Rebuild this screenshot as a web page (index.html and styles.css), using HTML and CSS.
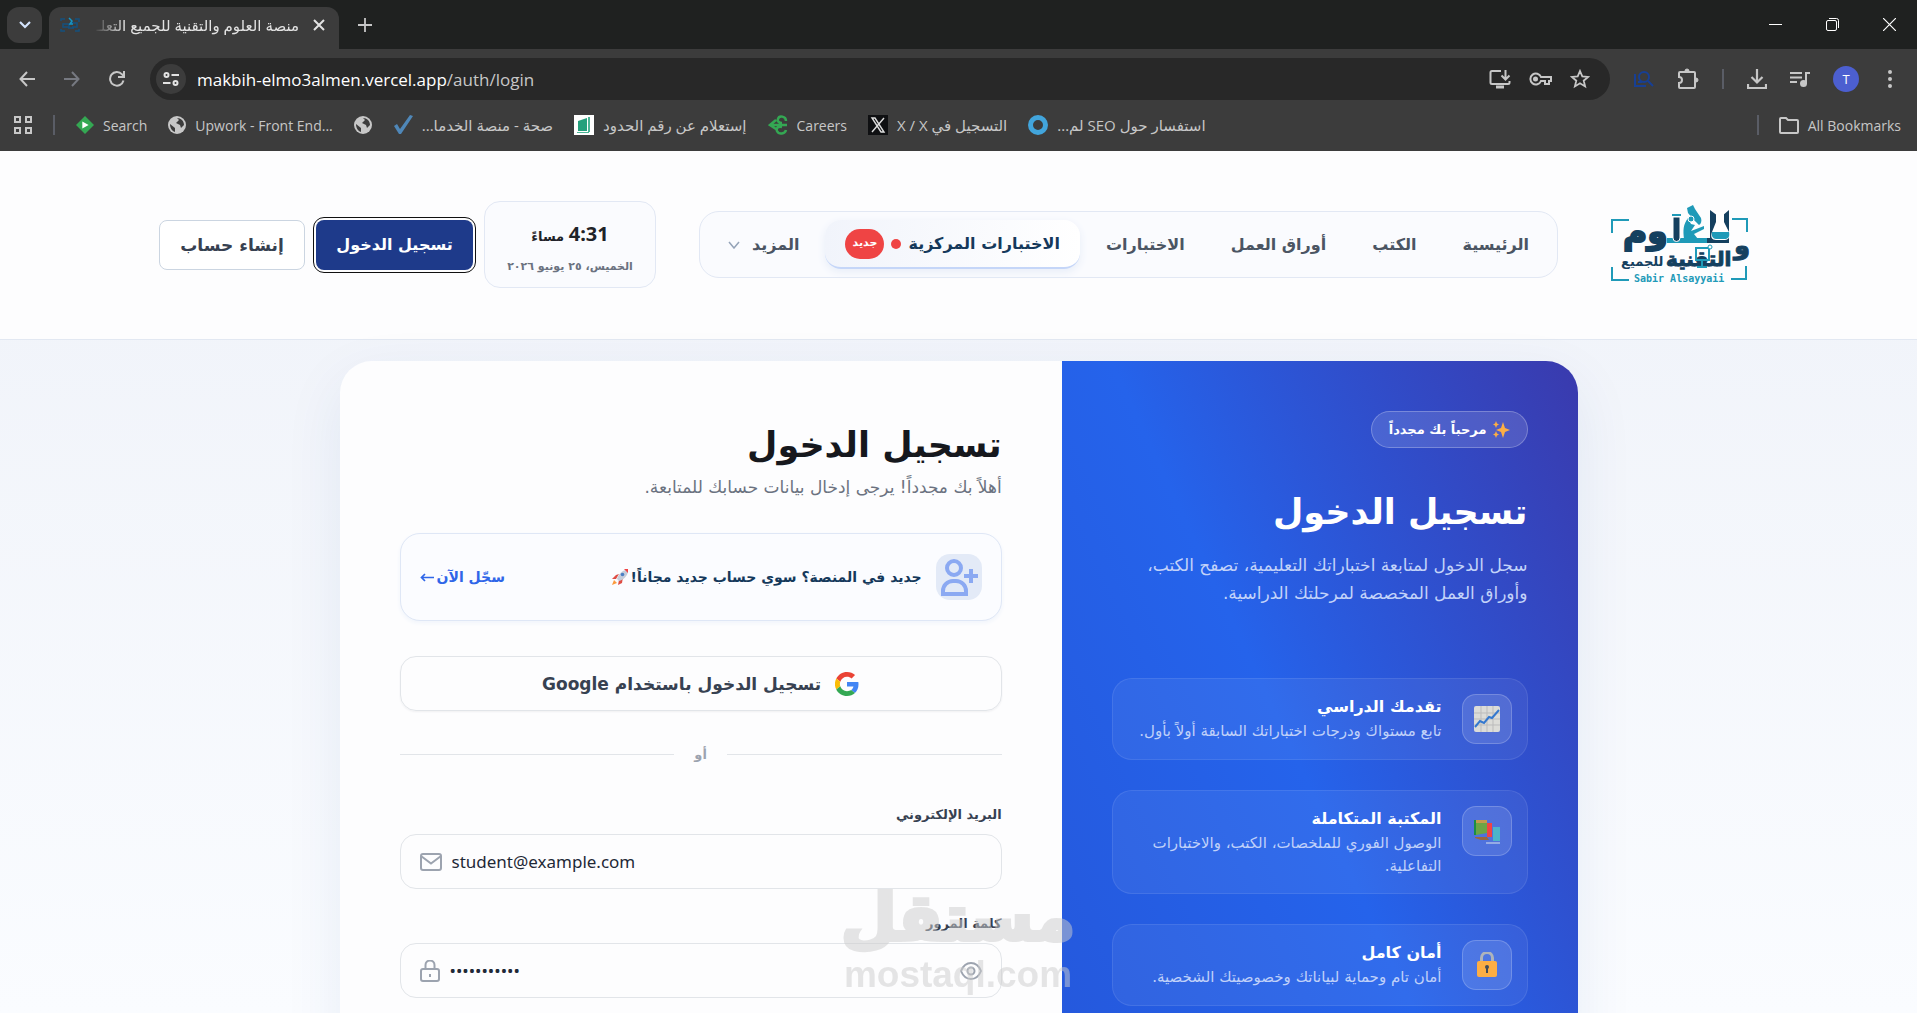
FILE: index.html
```html
<!DOCTYPE html>
<html lang="ar">
<head>
    <meta charset="UTF-8">
    <title>منصة العلوم والتقنية للجميع</title>
    <link rel="stylesheet" href="styles.css">
</head>
<body>
<div class="browser">
    <div class="tabs">
        <button class="tabSearch" aria-label="Search tabs"><svg width="12" height="8" viewBox="0 0 12 8"><path d="M1 1l5 5 5-5" fill="none" stroke="#d3e3fd" stroke-width="2.2"/></svg></button>
        <div class="tab">
            <svg class="favicon" width="20" height="16" viewBox="0 0 20 16"><path d="M1 4v-2h4M15 2h4v3M1 12v2h4M15 14h4v-2M3 7h6v3H3zM12 6h5v4h-5M8 11h6" fill="none" stroke="#15507d" stroke-width="1.5"/><path d="M9 1l3 3-2 3h3" fill="none" stroke="#1595c5" stroke-width="1.5"/></svg>
            <span class="tabTitle" dir="rtl">منصة العلوم والتقنية للجميع التعلـ</span>
            <button aria-label="Close tab"><svg width="12" height="12" viewBox="0 0 12 12"><path d="M1 1l10 10M11 1L1 11" stroke="#e3e3e3" stroke-width="2"/></svg></button>
        </div>
        <button class="newTab" aria-label="New tab"><svg width="14" height="14" viewBox="0 0 14 14"><path d="M7 0v14M0 7h14" stroke="#c7c7c7" stroke-width="1.8"/></svg></button>
        <div class="winBtns">
            <button aria-label="Minimize"><svg width="13" height="13" viewBox="0 0 13 13"><path d="M0 6.500h13" stroke="#fff"/></svg></button>
            <button aria-label="Restore"><svg width="13" height="13" viewBox="0 0 13 13" fill="none" stroke="#fff"><rect x=".5" y="2.500" width="10" height="10" rx="1.500"/><path d="M3 .5h7.500a2 2 0 0 1 2 2V10"/></svg></button>
            <button aria-label="Close"><svg width="13" height="13" viewBox="0 0 13 13"><path d="M0 0l13 13M13 0L0 13" stroke="#fff" stroke-width="1.200"/></svg></button>
        </div>
    </div>
    <div class="toolbar">
        <div class="navBtns">
            <button aria-label="Back"><svg width="16" height="16" viewBox="0 0 16 16"><path d="M16 8H1.500M8 1L1.500 8 8 15" fill="none" stroke="#c7c7c7" stroke-width="2"/></svg></button>
            <button aria-label="Forward"><svg width="16" height="16" viewBox="0 0 16 16"><path d="M0 8h14.500M8 1l6.500 7L8 15" fill="none" stroke="#767981" stroke-width="2"/></svg></button>
            <button aria-label="Reload"><svg width="16" height="16" viewBox="0 0 16 16"><path d="M14.500 9.500A6.800 6.800 0 1 1 13 3.300l2 2M15 0v6H9" fill="none" stroke="#c7c7c7" stroke-width="2"/></svg></button>
        </div>
        <div class="omnibox">
            <span class="siteInfo"><svg width="16" height="14" viewBox="0 0 16 14" fill="none" stroke="#e3e3e3" stroke-width="2"><circle cx="3.500" cy="3" r="2"/><path d="M8.500 3H16M0 11h7.500"/><circle cx="12.500" cy="11" r="2"/></svg></span>
            <span class="url">makbih-elmo3almen.vercel.app<span>/auth/login</span></span>
            <div class="omniIcons">
                <svg width="22" height="20" viewBox="0 0 22 20" fill="none" stroke="#c7c7c7" stroke-width="2"><path d="M12 2H3a1.500 1.500 0 0 0-1.500 1.500v10A1.500 1.500 0 0 0 3 15h16a1.500 1.500 0 0 0 1.500-1.500V12M16.500 1v9M12.500 6.500l4 4 4-4"/><path d="M7 18h8" stroke-width="3"/></svg>
                <svg width="23" height="14" viewBox="0 0 23 14" fill="none" stroke="#c7c7c7" stroke-width="2"><path d="M12 5h10v4h-2v3h-4V9h-4a5.500 5.500 0 1 1 0-4z"/><circle cx="6.500" cy="7" r="1.500" fill="#c7c7c7"/></svg>
                <svg width="20" height="20" viewBox="0 0 20 20" fill="none" stroke="#c7c7c7" stroke-width="1.800"><path d="M10 2l2.300 5.400 5.900.5-4.500 3.800 1.400 5.700L10 14.300l-5.100 3.100 1.400-5.700L1.800 7.900l5.900-.5z"/></svg>
            </div>
        </div>
        <div class="extBtns">
            <svg width="20" height="18" viewBox="0 0 20 18" fill="none" stroke="#173f94" stroke-width="2"><circle cx="10" cy="7" r="5"/><path d="M14 11l5 5M1 4v12h11M4 12h4"/></svg>
            <svg width="22" height="22" viewBox="0 0 22 22" fill="none" stroke="#c7c7c7" stroke-width="2"><path d="M3 4h14a1 1 0 0 1 1 1v14a1 1 0 0 1-1 1H3a1 1 0 0 1-1-1v-4c4 0 4-6 0-6V5a1 1 0 0 1 1-1z"/><path d="M8 3a2 2 0 0 1 4 0zM19 10a2 2 0 0 1 0 4z" fill="#c7c7c7" stroke-width="1"/></svg>
            <i class="sep"></i>
            <svg width="20" height="20" viewBox="0 0 20 20" fill="none" stroke="#c7c7c7" stroke-width="2.200"><path d="M10 0v13M4.500 8l5.500 5.500L15.500 8M1 15v4h18v-4"/></svg>
            <svg width="20" height="16" viewBox="0 0 20 16" fill="none" stroke="#c7c7c7" stroke-width="2"><path d="M0 2h12M0 6.500h12M0 11h7M16 13V2h4"/><circle cx="13.500" cy="12.500" r="2.500" fill="#c7c7c7"/></svg>
            <span class="avatar">T</span>
            <svg width="4" height="18" viewBox="0 0 4 18" fill="#c7c7c7"><circle cx="2" cy="2" r="2"/><circle cx="2" cy="9" r="2"/><circle cx="2" cy="16" r="2"/></svg>
        </div>
    </div>
    <div class="bookmarks">
        <svg width="18" height="18" viewBox="0 0 18 18" fill="none" stroke="#c7c7c7" stroke-width="2"><path d="M1 1h5v5H1zM12 1h5v5h-5zM1 12h5v5H1zM12 12h5v5h-5z"/></svg>
        <i class="sep"></i>
        <a href="#"><svg width="18" height="20" viewBox="0 0 20 20"><path d="M10 0l10 10-10 10L0 10z" fill="#34a853"/><path d="M7 6l7 4-7 4z" fill="#fff"/></svg>Search</a>
        <a href="#"><svg width="18" height="18" viewBox="0 0 18 18"><circle cx="9" cy="9" r="9" fill="#c7c7c7"/><path d="M2 8l5 4v4c-3-1-5-4-5-8zM9 2l2 2-3 3 4 2 1 3 3-3c0-4-3-7-7-7z" fill="#3c3c3c"/></svg>Upwork - Front End...</a>
        <a href="#" aria-label="Bookmark"><svg width="18" height="18" viewBox="0 0 18 18"><circle cx="9" cy="9" r="9" fill="#c7c7c7"/><path d="M2 8l5 4v4c-3-1-5-4-5-8zM9 2l2 2-3 3 4 2 1 3 3-3c0-4-3-7-7-7z" fill="#3c3c3c"/></svg></a>
        <a href="#"><svg width="20" height="20" viewBox="0 0 20 20"><path d="M1 11l3-2 3 5L17 0l3 1L8 19H6z" fill="#4f87b8"/></svg><bdi class="bmAr" dir="rtl">صحة - منصة الخدما...</bdi></a>
        <a href="#"><svg width="20" height="20" viewBox="0 0 20 20"><path d="M0 0h20v20H0z" fill="#fff"/><path d="M4 6l9-3v13H4z" fill="#24a07c"/><path d="M14 2h2v15h-2zM3 17h12v1H3z" fill="#4bb596"/></svg><bdi class="bmAr" dir="rtl">إستعلام عن رقم الحدود</bdi></a>
        <a href="#"><svg width="20" height="20" viewBox="0 0 20 20" fill="none" stroke="#34a853" stroke-width="2.500"><path d="M18 6c0-5-7-6-8-2-1 2 1 4 4 4M19 10H2M8 5L2 10l6 4M14 12c-4-1-6 1-5 4 2 4 8 3 9-1"/></svg>Careers</a>
        <a href="#"><svg width="20" height="20" viewBox="0 0 20 20"><path d="M0 0h20v20H0z" fill="#0f1012"/><path d="M4 3h3l9 14h-3zM16 3L4 17" fill="none" stroke="#ddd" stroke-width="1.400"/></svg><bdi class="bmAr" dir="rtl">التسجيل في X / X</bdi></a>
        <a href="#"><svg width="20" height="20" viewBox="0 0 20 20"><circle cx="10" cy="10" r="7.500" fill="none" stroke="#42a5dc" stroke-width="5"/></svg><bdi class="bmAr" dir="rtl">استفسار حول SEO لم...</bdi></a>
        <div class="allBm">
            <i class="sep"></i>
            <a href="#"><svg width="20" height="17" viewBox="0 0 20 17"><path d="M1 2a1 1 0 0 1 1-1h5l2 2h9a1 1 0 0 1 1 1v11a1 1 0 0 1-1 1H2a1 1 0 0 1-1-1z" fill="none" stroke="#c7c7c7" stroke-width="2"/></svg>All Bookmarks</a>
        </div>
    </div>
</div>

<div class="page" dir="rtl">
    <header class="header">
        <a class="logo" href="#" aria-label="العلوم والتقنية للجميع">
            <svg width="156" height="88" viewBox="0 -3 156 88" direction="ltr">
                <g fill="none" stroke="#1f9ab8" stroke-width="2"><path d="M11 29V16h17M131 15h15v13M11 63v13h17M130 75h15V62"/></g>
                <g class="logoDark">
                    <text x="22" y="39" class="logoBig">وم</text>
                    <text x="133" y="50" class="logoWaw">و</text>
                    <text x="65" y="62" class="logoMid">التقنية</text>
                    <text x="20" y="62" class="logoSmall">للجميع</text>
                </g>
                <path d="M109 6l8 6h4l7-6v33h-22v-5h3z" fill="#15405f"/>
                <path d="M115 8h8v10l5 10c2 5-1 8-4 8h-9c-4 0-6-3-4-8l4-10z" fill="#fff"/>
                <path d="M111 28h17c1 5-1 7-4 7h-9c-3 0-5-3-4-7z" fill="#1f9ab8"/>
                <path d="M66 34h40v5H66zM71 10h9v2h-9z" fill="#1f9ab8"/>
                <path d="M72 13h7v21a3 3 0 0 1-7 0z" fill="#15405f" stroke="#fff"/>
                <path d="M86 4l6-3 2 4 6 9c1 3 0 6-2 7l-6-6-5-6zM87 14l3 6 4 1-4 6 13-5v3l-10 5 4 5H83c-1-9-1-14 4-21z" fill="#1f9ab8"/>
                <circle cx="90" cy="15" r="3" fill="#1f9ab8" stroke="#fff"/>
                <path d="M95 44h13v12H95zM101 56v7M96 63h10" fill="none" stroke="#1f9ab8" stroke-width="2"/>
                <circle cx="109" cy="43" r="2" fill="#fff" stroke="#1f9ab8"/>
                <text x="33" y="78" class="logoLatin">Sabir Alsayyaii</text>
            </svg>
        </a>
        <nav class="nav">
            <a href="#">الرئيسية</a>
            <a href="#">الكتب</a>
            <a href="#">أوراق العمل</a>
            <a href="#">الاختبارات</a>
            <a href="#" class="on">الاختبارات المركزية<i class="dot"></i><span class="new">جديد</span></a>
            <a href="#">المزيد<svg class="chev" width="12" height="8" viewBox="0 0 12 8"><path d="M1 1l5 6 5-6" fill="none" stroke="#94a3b8" stroke-width="1.500"/></svg></a>
        </nav>
        <div class="actions">
            <div class="clock">
                <div class="time"><b>4:31</b> <span>مساءً</span></div>
                <div class="date">الخميس، ٢٥ يونيو ٢٠٢٦</div>
            </div>
            <a class="btn login" href="#">تسجيل الدخول</a>
            <a class="btn register" href="#">إنشاء حساب</a>
        </div>
    </header>

    <main class="main">
        <div class="card">
            <section class="intro">
                <span class="pill"><svg width="17" height="17" viewBox="0 0 17 17" fill="#fdae44"><path d="M10 1l2 6 5 2-5 2-2 6-2-6-5-2 5-2zM3 0l1 2.500L6 3.500 4 4.500 3 7 2 4.500 0 3.500l2-1zM3 10l1 2.500 2 1-2 1L3 17l-1-2.500-2-1 2-1z"/></svg>مرحباً بك مجدداً</span>
                <h2>تسجيل الدخول</h2>
                <p class="lead">سجل الدخول لمتابعة اختباراتك التعليمية، تصفح الكتب،<br>وأوراق العمل المخصصة لمرحلتك الدراسية.</p>
                <div class="feats">
                    <div class="feat">
                        <span class="featIcon"><svg width="26" height="26" viewBox="0 0 26 26"><rect width="26" height="26" rx="2" fill="#dcdcd8"/><path d="M7 0v26M13 0v26M19 0v26M0 7h26M0 13h26M0 19h26" stroke="#bbb"/><path d="M1 21l5-6 4 2 5-6 3 1 7-8" fill="none" stroke="#3478cf" stroke-width="2"/></svg></span>
                        <div><h3>تقدمك الدراسي</h3><p>تابع مستواك ودرجات اختباراتك السابقة أولاً بأول.</p></div>
                    </div>
                    <div class="feat">
                        <span class="featIcon"><svg width="26" height="26" viewBox="0 0 26 26"><path d="M0 2h3v15H0z" fill="#1c8e45"/><path d="M2 2h11v13l-11 2z" fill="#6ca545"/><path d="M2 2h11v3H2z" fill="#c39b4c"/><path d="M13 5h5v14h-5z" fill="#ef4444"/><path d="M19 9h7v14h-7z" fill="#4db4c9"/><path d="M1 19h12l2 3h-8l-6-2z" fill="#9a6640"/><path d="M12 25h14" stroke="#dbe4ee"/></svg></span>
                        <div><h3>المكتبة المتكاملة</h3><p>الوصول الفوري للملخصات، الكتب، والاختبارات<br>التفاعلية.</p></div>
                    </div>
                    <div class="feat">
                        <span class="featIcon"><svg width="22" height="26" viewBox="0 0 22 26"><path d="M5.500 10V6a5.500 5.500 0 0 1 11 0v4" fill="none" stroke="#aeb4bb" stroke-width="3"/><rect x="1" y="9" width="20" height="16" rx="2" fill="#fdae44"/><circle cx="11" cy="15" r="2" fill="#424b59"/><path d="M10 15h2v6h-2z" fill="#424b59"/></svg></span>
                        <div><h3>أمان كامل</h3><p>أمان تام وحماية لبياناتك وخصوصيتك الشخصية.</p></div>
                    </div>
                </div>
            </section>

            <section class="formSide">
                <h1>تسجيل الدخول</h1>
                <p class="sub">أهلاً بك مجدداً! يرجى إدخال بيانات حسابك للمتابعة.</p>
                <div class="signup">
                    <span class="userIcon"><svg width="38" height="38" viewBox="0 0 38 38" fill="none" stroke="#8ba9f2" stroke-width="4"><circle cx="14" cy="10" r="7"/><path d="M3 36v-3a10 10 0 0 1 10-10h3a10 10 0 0 1 10 10v3zM31 11v14M24 18h14"/></svg></span>
                    <b>جديد في المنصة؟ سوي حساب جديد مجاناً!</b>
                    <svg class="rocket" width="16" height="16" viewBox="0 0 16 16"><path d="M4 6l3-1-3 5-4 0zM11 8l-1 6-4 2 1-5z" fill="#df4d44"/><path d="M15 1c-5 0-9 5-10 9l2 2c4-1 9-5 9-10z" fill="#c5cdda"/><path d="M12 0h4v4z" fill="#ef4444"/><circle cx="10.500" cy="5.500" r="1.800" fill="#4a7fc4"/><path d="M0 16l2-5 3 3z" fill="#fb9a3c"/></svg>
                    <a href="#">سجّل الآن<svg width="14" height="9" viewBox="0 0 14 9"><path d="M14 4.500H2M5 1L1.500 4.500 5 8" fill="none" stroke="#2f66e8" stroke-width="1.700"/></svg></a>
                </div>
                <button class="google">
                    <svg width="24" height="24" viewBox="0 0 48 48"><path fill="#ea4335" d="M24 9.500c3.500 0 6.700 1.200 9.200 3.600l6.900-6.900C35.900 2.400 30.500 0 24 0 14.600 0 6.500 5.400 2.600 13.200l8 6.200C12.400 13.700 17.700 9.500 24 9.500z"/><path fill="#4285f4" d="M47 24.500c0-1.600-.2-3.100-.4-4.500H24v9h12.900c-.6 3-2.200 5.500-4.700 7.200l7.700 6c4.500-4.200 7.100-10.400 7.100-17.700z"/><path fill="#fbbc05" d="M10.500 28.600a14.500 14.500 0 0 1 0-9.200l-8-6.200a24 24 0 0 0 0 21.600z"/><path fill="#34a853" d="M24 48c6.500 0 11.900-2.100 15.900-5.800l-7.700-6c-2.100 1.500-4.900 2.300-8.200 2.300-6.300 0-11.600-4.200-13.500-9.900l-8 6.200C6.500 42.600 14.600 48 24 48z"/></svg>
                    <span>تسجيل الدخول باستخدام Google</span>
                </button>
                <div class="or">أو</div>
                <label for="email">البريد الإلكتروني</label>
                <div class="field">
                    <input id="email" type="email" dir="ltr" value="student@example.com">
                    <svg width="22" height="18" viewBox="0 0 22 18" fill="none" stroke="#9ca3af" stroke-width="2"><rect x="1" y="1" width="20" height="16" rx="2"/><path d="M1 3l10 7.500L21 3"/></svg>
                </div>
                <label for="password">كلمة المرور</label>
                <div class="field">
                    <button class="eye" aria-label="إظهار كلمة المرور"><svg width="22" height="18" viewBox="0 0 22 18" fill="none" stroke="#9ca3af" stroke-width="2"><path d="M1 9c2-5 6-8 10-8s8 3 10 8c-2 5-6 8-10 8S3 14 1 9z"/><circle cx="11" cy="9" r="3.500"/></svg></button>
                    <input id="password" type="password" dir="ltr" value="password123">
                    <svg width="20" height="22" viewBox="0 0 20 22" fill="none" stroke="#9ca3af" stroke-width="2"><rect x="1" y="9" width="18" height="12" rx="2"/><path d="M5.500 9V5a4.500 4.500 0 0 1 9 0v4M10 14v3"/></svg>
                </div>
            </section>
        </div>
    </main>
</div>
<div class="watermark"><span class="wmAr" dir="rtl">مستقل</span><span>mostaql.com</span></div>
</body>
</html>
```
FILE: styles.css
```css
*{
    margin:0;
    padding:0;
    box-sizing: border-box;
}
html,body{
    height: 100%;
    overflow: hidden;
}
body{
    display: flex;
    flex-direction: column;
    font-family: "DejaVu Sans", sans-serif;
}
a{
    text-decoration: none;
    color: inherit;
}
button{
    border: 0;
    background: none;
    font: inherit;
    color: inherit;
}
svg{
    flex: none;
    display: block;
}
/* browser */
.browser{
    flex: none;
    font-family: "Open Sans", "DejaVu Sans", sans-serif;
    background: #3c3c3c;
    color: #c7c7c7;
}
.tabs{
    height: 49px;
    background: #1f2120;
    display: flex;
    align-items: flex-end;
    padding-left: 7px;
}
.tabSearch{
    width: 35px;
    height: 36px;
    margin: 0 7px 6px 0;
    border-radius: 12px;
    background: #3c3c3c;
    display: grid;
    place-items: center;
}
.tab{
    width: 290px;
    height: 42px;
    padding: 0 14px 6px 11px;
    border-radius: 12px 12px 0 0;
    background: #3c3c3c;
    display: flex;
    align-items: center;
    gap: 14px;
}
.tabTitle{
    flex: 1;
    min-width: 0;
    overflow: hidden;
    white-space: nowrap;
    font-size: 15px;
    color: #e3e3e3;
    -webkit-mask-image: linear-gradient(to left, #000 85%, transparent);
    mask-image: linear-gradient(to left, #000 85%, transparent);
}
.newTab{
    margin: 0 0 17px 19px;
}
.winBtns{
    display: flex;
    gap: 44px;
    margin: 0 21px 18px auto;
}
.toolbar{
    height: 60px;
    display: flex;
    align-items: center;
    padding: 0 25px 0 19px;
}
.navBtns{
    display: flex;
    gap: 29px;
    margin-right: 25px;
}
.omnibox{
    flex: 1;
    height: 42px;
    border-radius: 21px;
    background: #282828;
    display: flex;
    align-items: center;
    padding: 0 20px 0 6px;
}
.siteInfo{
    width: 30px;
    height: 30px;
    border-radius: 50%;
    background: #3c3c3c;
    display: grid;
    place-items: center;
    margin-right: 11px;
}
.url{
    font-size: 17px;
    color: #fff;
}
.url span{
    color: #c7c7c7;
}
.omniIcons{
    display: flex;
    align-items: center;
    gap: 18px;
    margin-left: auto;
}
.extBtns{
    display: flex;
    align-items: center;
    gap: 23px;
    margin-left: 24px;
}
.sep{
    width: 2px;
    height: 20px;
    background: #5a5d66;
}
.avatar{
    width: 26px;
    height: 26px;
    margin-right: 6px;
    border-radius: 50%;
    background: #4c5fd0;
    color: #fff;
    font-size: 13px;
    line-height: 26px;
    text-align: center;
}
.bookmarks{
    height: 42px;
    display: flex;
    align-items: center;
    gap: 21px;
    padding: 0 16px 10px 14px;
    font-size: 14px;
}
.bookmarks a{
    display: flex;
    align-items: center;
    gap: 9px;
    white-space: nowrap;
}
.bmAr{
    font-size: 15px;
}
.allBm{
    display: flex;
    align-items: center;
    gap: 20px;
    margin-left: auto;
}
/* page */
.page{
    flex: 1;
    min-height: 0;
    overflow: hidden;
    background: linear-gradient(#f1f4fa 20%, #fafcff);
}
.header{
    height: 189px;
    padding: 0 160px 1px 159px;
    background: #fdfdfe;
    border-bottom: 1px solid #e2e8f2;
    display: flex;
    align-items: center;
    justify-content: space-between;
}
.logoDark{
    fill: #15405f;
    stroke: #15405f;
    font-weight: bold;
}
.logoBig{
    font-size: 33px;
    stroke-width: 2px;
}
.logoWaw{
    font-size: 26px;
}
.logoMid{
    font-size: 20px;
    stroke-width: 1px;
}
.logoSmall{
    font-size: 13px;
    stroke: none;
}
.logoLatin{
    font: bold 10px "DejaVu Sans Mono", monospace;
    fill: #1f9ab8;
}
.nav{
    height: 67px;
    padding: 8px;
    border: 1px solid #e2e8f4;
    border-radius: 20px;
    background: #fafbfe;
    display: flex;
    gap: 6px;
    font-size: 16px;
    font-weight: bold;
    color: #4b5563;
}
.nav a{
    display: flex;
    align-items: center;
    padding: 0 20px;
    border-radius: 16px;
    white-space: nowrap;
}
.nav .on{
    color: #15395b;
    background: linear-gradient(to left, #fff, #f1f4fb);
    border-bottom: 2px solid #c5d6f8;
    box-shadow: 0 3px 8px #e7edf8;
}
.dot{
    width: 10px;
    height: 10px;
    margin: 0 7px;
    border-radius: 50%;
    background: #ef4444;
}
.new{
    width: 39px;
    height: 30px;
    border-radius: 15px;
    background: #ef4444;
    color: #fff;
    font-size: 11px;
    line-height: 28px;
    text-align: center;
}
.chev{
    margin-right: 12px;
}
.actions{
    display: flex;
    align-items: center;
    gap: 11px;
}
.clock{
    width: 172px;
    height: 87px;
    border: 1px solid #e2e8f4;
    border-radius: 16px;
    background: #fafbfe;
    text-align: center;
    padding-top: 18px;
}
.time{
    font-size: 13px;
    font-weight: bold;
    line-height: 32px;
    color: #1f2328;
}
.time b{
    font: bold 20px "Noto Sans", sans-serif;
}
.date{
    font-size: 11px;
    font-weight: bold;
    line-height: 28px;
    color: #6b7280;
}
.btn{
    height: 50px;
    line-height: 49px;
    border-radius: 8px;
    font-size: 16px;
    font-weight: bold;
    text-align: center;
    white-space: nowrap;
}
.login{
    width: 157px;
    background: #1e3a8a;
    color: #fff;
    outline: 1px solid #111;
    outline-offset: 2px;
}
.register{
    width: 146px;
    border: 1px solid #cbd5e1;
    background: #fff;
    color: #374151;
    font-size: 17px;
}
.main{
    padding: 21px 0;
}
.card{
    max-width: 1238px;
    margin: 0 auto;
    border-radius: 32px;
    overflow: hidden;
    background: #fdfdfe;
    box-shadow: 0 20px 60px rgba(30,58,138,.08);
    display: grid;
    grid-template-columns: 5fr 7fr;
}
.intro{
    padding: 50px;
    color: #fff;
    background: linear-gradient(245deg, #3a3aad, #2563eb 55%, #2558dc);
}
.pill{
    display: inline-flex;
    align-items: center;
    gap: 6px;
    height: 37px;
    padding: 0 17px;
    border: 1px solid rgba(255,255,255,.25);
    border-radius: 19px;
    background: rgba(255,255,255,.13);
    font-size: 13px;
    font-weight: bold;
}
.intro h2{
    margin-top: 34px;
    font-size: 35px;
    line-height: 60px;
}
.lead{
    margin-top: 9px;
    font-size: 17px;
    line-height: 28px;
    white-space: nowrap;
    color: #c3d3f9;
}
.feats{
    display: grid;
    gap: 30px;
    margin-top: 71px;
}
.feat{
    display: flex;
    gap: 20px;
    padding: 15px;
    border: 1px solid rgba(255,255,255,.09);
    border-radius: 20px;
    background: rgba(255,255,255,.06);
}
.featIcon{
    flex: none;
    width: 50px;
    height: 50px;
    border: 1px solid rgba(255,255,255,.2);
    border-radius: 14px;
    background: rgba(255,255,255,.12);
    display: grid;
    place-items: center;
}
.feat h3{
    font-size: 16px;
    line-height: 26px;
}
.feat p{
    font-size: 15px;
    line-height: 23px;
    white-space: nowrap;
    color: #c0d1f9;
}
.formSide{
    padding: 57px 60px;
}
.formSide h1{
    font-size: 35px;
    line-height: 55px;
    color: #16181d;
}
.sub{
    font-size: 17px;
    line-height: 28px;
    color: #6b7280;
}
.signup{
    height: 88px;
    margin-top: 32px;
    padding: 0 19px;
    border: 1px solid #dfe7f6;
    border-radius: 20px;
    background: #fbfcff;
    box-shadow: 0 2px 4px #f0f4fb;
    display: flex;
    align-items: center;
    font-size: 14px;
}
.userIcon{
    width: 46px;
    height: 46px;
    border-radius: 14px;
    background: #e3eaf7;
    display: grid;
    place-items: center;
}
.signup b{
    margin: 0 14px 0 3px;
    color: #15395b;
}
.signup a{
    display: flex;
    align-items: center;
    gap: 3px;
    margin-right: auto;
    font-weight: bold;
    color: #2f66e8;
}
.google{
    width: 100%;
    height: 55px;
    margin-top: 35px;
    border: 1px solid #e2e5e9;
    border-radius: 16px;
    box-shadow: 0 1px 2px #f0f0f2;
    display: flex;
    align-items: center;
    justify-content: center;
    gap: 14px;
    font-size: 17px;
    font-weight: bold;
    color: #374151;
}
.or{
    display: flex;
    align-items: center;
    gap: 20px;
    height: 24px;
    margin: 31px 0 32px;
    font-size: 13px;
    font-weight: bold;
    color: #9ca3af;
}
.or::before,.or::after{
    content: "";
    flex: 1;
    height: 1px;
    background: #e2e5e9;
}
.formSide label{
    display: block;
    font-size: 13px;
    font-weight: bold;
    line-height: 34px;
    padding-bottom: 2px;
    color: #374151;
}
.field{
    height: 55px;
    margin-bottom: 18px;
    padding: 0 19px;
    border: 1px solid #e2e5e9;
    border-radius: 16px;
    display: flex;
    align-items: center;
    gap: 10px;
}
.field input{
    flex: 1;
    min-width: 0;
    border: 0;
    outline: 0;
    background: none;
    font: 17px "Noto Sans", sans-serif;
    color: #1f2937;
}
/* stamp laid over the page */
.watermark{
    position: absolute;
    left: 843px;
    top: 880px;
    width: 230px;
    display: flex;
    flex-direction: column;
    align-items: center;
    font: bold 37px/38px "Liberation Sans", sans-serif;
    color: #cdcdcd;
    opacity: .5;
    pointer-events: none;
}
.wmAr{
    font: bold 64px/76px "DejaVu Sans", sans-serif;
    -webkit-text-stroke: 4px #cdcdcd;
}
```
